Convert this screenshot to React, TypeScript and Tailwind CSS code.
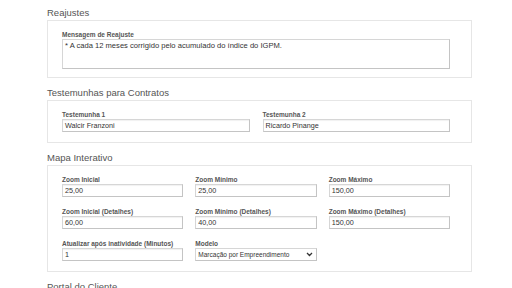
import React from 'react';

const font = { fontFamily: '"Liberation Sans", Arial, sans-serif' };

function Section({ title, children }: { title: string; children: React.ReactNode }) {
  return (
    <div className="mb-[9px]">
      <h4 className="text-[9.5px] leading-[12px] text-[#555] mb-[1px]">{title}</h4>
      <div className="border border-[#e6e6e6] bg-white pl-[14px] pr-[21px]">{children}</div>
    </div>
  );
}

function Field({ label, value }: { label: string; value: string }) {
  return (
    <div>
      <label className="block text-[6.5px] leading-[7px] font-bold text-[#555] mb-[1px]">{label}</label>
      <div className="h-[13px] border border-[#d6d6d6] border-b-[#c4c4c4] border-r-[#c4c4c4] shadow-[inset_0_1px_1px_rgba(0,0,0,0.06)] px-[2px] text-[7.2px] leading-[11px] text-[#333] bg-white">
        {value}
      </div>
    </div>
  );
}

function SelectField({ label, value }: { label: string; value: string }) {
  return (
    <div>
      <label className="block text-[6.5px] leading-[7px] font-bold text-[#555] mb-[1px]">{label}</label>
      <div className="h-[13px] border border-[#d6d6d6] border-b-[#c4c4c4] border-r-[#c4c4c4] px-[2px] flex items-center justify-between text-[6.5px] text-[#333] bg-white">
        <span>{value}</span>
        <svg width="7" height="5" viewBox="0 0 7 5" className="mr-[1px]">
          <path d="M1 1 L3.5 3.5 L6 1" fill="none" stroke="#333" strokeWidth="1.3" />
        </svg>
      </div>
    </div>
  );
}

export default function App() {
  return (
    <div className="w-[512px] h-[288px] overflow-hidden bg-white pl-[47px] pr-[40px] pt-[7px]" style={font}>
      <Section title="Reajustes">
        <div className="pt-[10px] pb-[8px]">
          <label className="block text-[6.5px] leading-[7px] font-bold text-[#555] mb-[1px]">Mensagem de Reajuste</label>
          <div className="h-[30px] border border-[#d6d6d6] border-b-[#c4c4c4] border-r-[#c4c4c4] px-[2px] pt-[1px] text-[7.6px] leading-[9px] text-[#333]">
            * A cada 12 meses corrigido pelo acumulado do índice do IGPM.
          </div>
        </div>
      </Section>

      <Section title="Testemunhas para Contratos">
        <div className="grid grid-cols-2 gap-x-[13px] pt-[10px] pb-[10px]">
          <Field label="Testemunha 1" value="Walcir Franzoni" />
          <Field label="Testemunha 2" value="Ricardo Pinange" />
        </div>
      </Section>

      <Section title="Mapa Interativo">
        <div className="grid grid-cols-3 gap-x-[12px] gap-y-[11px] pt-[10px] pb-[10px]">
          <Field label="Zoom Inicial" value="25,00" />
          <Field label="Zoom Mínimo" value="25,00" />
          <Field label="Zoom Máximo" value="150,00" />
          <Field label="Zoom Inicial (Detalhes)" value="60,00" />
          <Field label="Zoom Mínimo (Detalhes)" value="40,00" />
          <Field label="Zoom Máximo (Detalhes)" value="150,00" />
          <Field label="Atualizar após inatividade (Minutos)" value="1" />
          <SelectField label="Modelo" value="Marcação por Empreendimento" />
        </div>
      </Section>

      <Section title="Portal do Cliente">
        <div className="h-[40px]" />
      </Section>
    </div>
  );
}
